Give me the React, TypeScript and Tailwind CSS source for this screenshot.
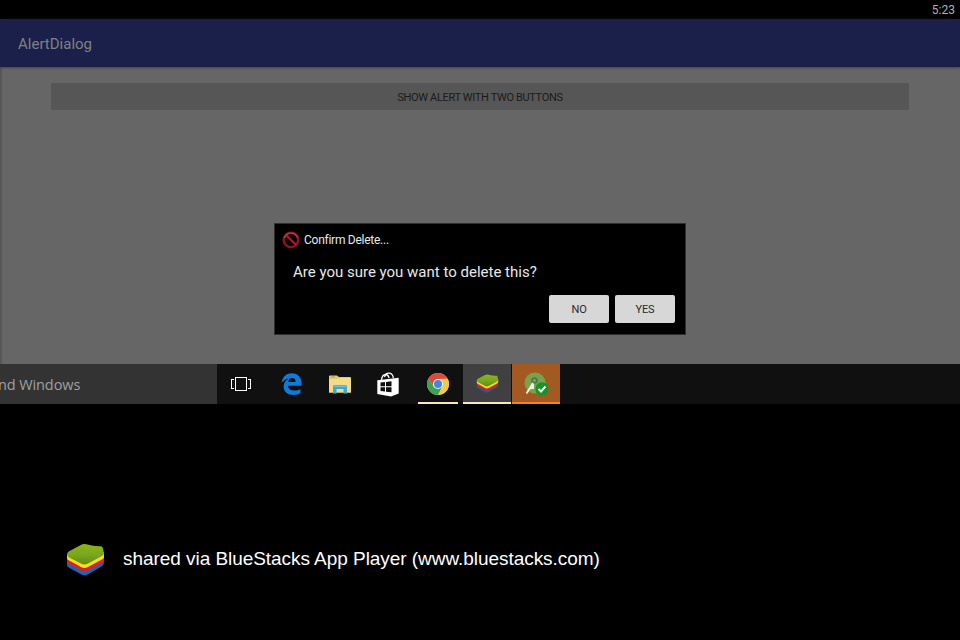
import React from 'react';

function BlueStacksLogo({ className, id, dark }: { className: string; id: string; dark?: boolean }) {
  return (
    <svg className={className} viewBox="0 0 38 32">
      <defs>
        <linearGradient id={id} x1="0" y1="0" x2="0" y2="1">
          <stop offset="0" stopColor="#8ab41c" />
          <stop offset=".5" stopColor="#7ba81c" />
          <stop offset="1" stopColor="#5c8f10" />
        </linearGradient>
      </defs>
      <path d="M1 19 V22 Q1 23 3 24 L15 30.500 Q18 32.200 21 30.500 L35 22.500 Q37 21 37 19 V15 L1 14Z" fill={dark ? '#34568c' : '#1a66b4'} />
      <path d="M1 14 V18 Q1 19.500 3 20.500 L15 27 Q18 28.500 21 27 L35 19.500 Q37 18.500 37 17 V11Z" fill="#d9202a" />
      <path d="M1 11 V14.500 Q1 16 3 17 L15 23.500 Q18 25 21 23.500 L35 16 Q37 15 37 13.500 V9Z" fill="#f8df1c" />
      <path d="M1 11 Q1 9.500 3 8 L14 2 Q17 .3 21 1.300 Q27 3.300 34 3 Q35.500 3 36 5 L37 10 Q37 11.500 35 12.700 L21 20.200 Q18 21.700 15 20.200 L3 14 Q1 13 1 11Z" fill={`url(#${id})`} />
    </svg>
  );
}

function ProhibitedIcon() {
  return (
    <svg className="h-[18px] w-[18px]" viewBox="0 0 18 18" fill="none">
      <circle cx="9" cy="9" r="7.200" stroke="#8c1422" strokeWidth="2.600" />
      <path d="M3.800 4 L14.200 14" stroke="#a51c2b" strokeWidth="2.300" />
      <path d="M2.300 7 A7 7 0 0 1 15.500 6.500" stroke="#c23947" strokeWidth="1.200" />
    </svg>
  );
}

function TaskViewIcon() {
  return (
    <svg className="h-[14px] w-[20px]" viewBox="0 0 20 14" fill="none" stroke="#fff" shapeRendering="crispEdges">
      <path d="M4.500 .5h11v13h-11z M3 2.500H.5v9H3 M17 2.500h2.500v9H17" />
    </svg>
  );
}

function EdgeIcon() {
  return (
    <svg className="h-[22px] w-[21px]" viewBox="0 0 21 22">
      <path
        d="M.5 10 C1.500 3.500 5.500 .3 11 .3 C17 .3 20.500 4.800 20.500 10.300 V12.700 H7 C7.300 16 10.200 17.600 13.500 17.600 C15.800 17.600 17.800 17 19.400 16 V20.300 C17.500 21.400 15.200 21.900 12.500 21.900 C6.500 21.900 2.600 18.600 2.600 13.400 C2.600 9.800 4.700 7 7.800 5.400 C4.800 5.800 2.400 7.300 .5 10Z M7.200 8.900 H14.600 C14.600 6.500 13.400 5.100 11.200 5.100 C9 5.100 7.500 6.500 7.200 8.900Z"
        fill="#0f7ad8"
        fillRule="evenodd"
      />
    </svg>
  );
}

function FolderIcon() {
  return (
    <svg className="h-[19px] w-[22px]" viewBox="0 0 22 19">
      <path d="M0 1 Q0 .5 1 .5 H8 L10 2 H21 Q22 2 22 3 V17.500 H0Z" fill="#e9c768" />
      <path d="M0 4 H9 L11 3 H22 V17.500 H0Z" fill="#f5db87" />
      <path d="M2 1.500h4v1H2z" fill="#6aa8b0" />
      <path d="M4 11.500 Q4 10 5.500 10 H16.500 Q18 10 18 11.500 V18.500 H14.500 V14 H7.500 V18.500 H4Z" fill="#3bacd0" />
      <path d="M5 10.500h12V12H5z" fill="#68c5dd" />
    </svg>
  );
}

function StoreIcon() {
  return (
    <svg className="h-[25px] w-[22px]" viewBox="0 0 22 25">
      <path d="M4.500 8 C5 4 6.500 2.500 8.500 2.500 C10.500 2.500 11.500 3.500 12 6 M7.500 5 C8.500 2 10.500 .8 12.500 1.200 C15 1.700 16 3.500 16.300 6" fill="none" stroke="#fff" strokeWidth="1.300" />
      <path d="M.3 8.300 L21.700 5.800 V21.500 L14 24.600 L.3 22Z" fill="#fff" />
      <path d="M3.500 10.500 L8 10 V14.300 H3.500Z M9 9.900 L14.500 9.300 V14.300 H9Z M3.500 15.300 H8 V19.500 L3.500 19Z M9 15.300 H14.500 V20.300 L9 19.700Z" fill="#101010" />
    </svg>
  );
}

function ChromeIcon() {
  return (
    <svg className="h-[22px] w-[22px]" viewBox="0 0 22 22">
      <circle cx="11" cy="11" r="11" fill="#f3ca47" />
      <path d="M1.470 5.500 A11 11 0 0 1 20.530 5.500 L11 6 L6.670 13.500Z" fill="#d94b3d" />
      <path d="M1.470 5.500 A11 11 0 0 0 11 22 L15.330 13.500 L6.670 13.500Z" fill="#3da455" />
      <path d="M11 6 H20.800 A11 11 0 0 1 11 22 L15.330 13.500Z" fill="#f3ca47" />
      <circle cx="11" cy="11" r="5.100" fill="#f1f3f3" />
      <circle cx="11" cy="11" r="4" fill="#4687dc" />
    </svg>
  );
}

function StudioIcon() {
  return (
    <svg className="h-[25px] w-[25px]" viewBox="0 0 25 25">
      <circle cx="11" cy="11" r="10.500" fill="#78a24b" />
      <circle cx="10.500" cy="8.500" r="3.300" fill="#4e7950" />
      <circle cx="10.500" cy="8.500" r="1.300" fill="#8eab78" />
      <path d="M9 11 L2.500 21.500 M9 12 V17 M6 16.500 L10 15" stroke="#f0f0e7" strokeWidth="1.900" fill="none" />
      <circle cx="18" cy="17" r="6.700" fill="#159529" />
      <path d="M14.500 17 L17 19.500 L21.500 14.500" stroke="#fff" strokeWidth="1.900" fill="none" />
    </svg>
  );
}

function DialogButton({ label }: { label: string }) {
  return (
    <button className="h-[28px] w-[60px] rounded-[2px] bg-[#d7d7d7] pt-px text-[11px] leading-[27px] tracking-[-0.1px] text-[#292929]">
      {label}
    </button>
  );
}

export default function App() {
  return (
    <div className="flex h-[640px] w-[960px] flex-col overflow-hidden bg-black font-['Roboto',sans-serif]">
      <div className="relative flex h-[364px] flex-col bg-[#666]">
        <div className="flex h-[19px] shrink-0 justify-end bg-black pr-[5px] pt-px text-[12px] leading-[18px] text-[#b0b0b0]">
          5:23
        </div>
        <header className="z-10 flex h-[48px] shrink-0 items-center bg-[#1a2049] pl-[18px] pt-[2px] text-[15px] text-[#808083] shadow-[0_1px_2px_#444]">
          AlertDialog
        </header>
        <main className="flex-1 border-l-2 border-[#575757] pl-[49px] pt-[16px]">
          <button className="block h-[27px] w-[858px] bg-[#565656] pt-px text-[11px] leading-[27px] tracking-[-0.34px] text-[#1b1b1b]">
            SHOW ALERT WITH TWO BUTTONS
          </button>
        </main>
        <section className="absolute left-[274px] top-[223px] flex h-[112px] w-[412px] flex-col border border-[#303030] bg-black pl-[7px] pt-[7px] text-[#e8e8e8]">
          <div className="flex h-[18px] items-center gap-[4px] text-[12px] tracking-[-0.26px]">
            <ProhibitedIcon />
            <span>Confirm Delete...</span>
          </div>
          <p className="mt-[13px] pl-[11px] text-[15px] leading-[20px]">Are you sure you want to delete this?</p>
          <div className="mt-[13px] flex justify-end gap-[6px] pr-[10px]">
            <DialogButton label="NO" />
            <DialogButton label="YES" />
          </div>
        </section>
      </div>
      <nav className="flex h-[40px] shrink-0 bg-[#101010]">
        <div className="flex w-[217px] items-center whitespace-nowrap bg-[#333] pt-[2px] font-['Open_Sans',sans-serif] text-[14.5px] tracking-[-0.1px] text-[#a0a0a0]">
          <span className="ml-[-2px]">nd Windows</span>
        </div>
        <div className="flex w-[48px] items-center justify-center"><TaskViewIcon /></div>
        <div className="flex w-[52px] items-center justify-center"><EdgeIcon /></div>
        <div className="flex w-[46px] items-center justify-center"><FolderIcon /></div>
        <div className="flex w-[50px] items-center justify-center"><StoreIcon /></div>
        <div className="ml-[5px] flex w-[40px] items-center justify-center border-b-2 border-[#fbe6b8] pt-[2px]"><ChromeIcon /></div>
        <div className="ml-[5px] flex w-[48px] items-center justify-center border-b-2 border-[#fbe6b8] bg-[#404042]">
          <BlueStacksLogo id="taskbar-green" className="h-[19px] w-[23px]" dark />
        </div>
        <div className="ml-[1px] flex w-[48px] items-center justify-center border-b-2 border-[#f58027] bg-[#a35a22] pt-[3px]"><StudioIcon /></div>
      </nav>
      <footer className="flex h-[236px] items-center pl-[66px] pt-[74px] font-['Liberation_Sans',Arial,sans-serif] text-[19px] tracking-[-0.05px] text-white">
        <BlueStacksLogo id="footer-green" className="h-[33px] w-[39px]" />
        <span className="ml-[18px]">shared via BlueStacks App Player (www.bluestacks.com)</span>
      </footer>
    </div>
  );
}
